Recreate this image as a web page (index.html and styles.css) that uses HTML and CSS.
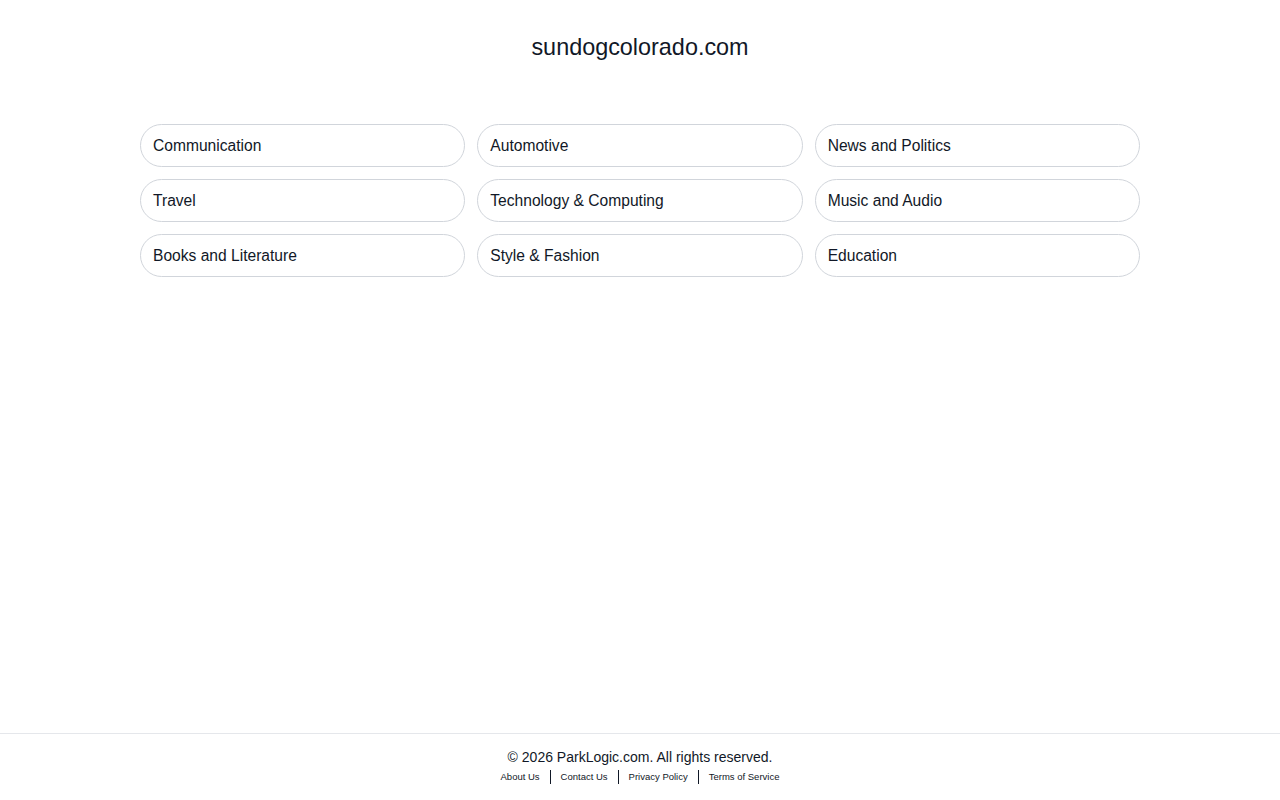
FILE: index.html
```html
<!DOCTYPE html>
<html lang="en">
<head>
  <meta charset="UTF-8">
  <meta name="viewport" content="width=device-width, initial-scale=1.0">
  <title>sundogcolorado.com</title>
  <link rel="stylesheet" href="styles.css">
</head>
<body>
  <main class="page">
    <h1 class="domain">sundogcolorado.com</h1>

    <div class="topics">
      <a class="topic" href="#">Communication</a>
      <a class="topic" href="#">Automotive</a>
      <a class="topic" href="#">News and Politics</a>
      <a class="topic" href="#">Travel</a>
      <a class="topic" href="#">Technology &amp; Computing</a>
      <a class="topic" href="#">Music and Audio</a>
      <a class="topic" href="#">Books and Literature</a>
      <a class="topic" href="#">Style &amp; Fashion</a>
      <a class="topic" href="#">Education</a>
    </div>
  </main>

  <footer class="footer">
    <p class="copyright">&copy; 2026 ParkLogic.com. All rights reserved.</p>
    <nav class="footer-links">
      <a href="#">About Us</a>
      <a href="#">Contact Us</a>
      <a href="#">Privacy Policy</a>
      <a href="#">Terms of Service</a>
    </nav>
  </footer>
</body>
</html>
```
FILE: styles.css
```css
:root {
  --text-color: #111827;
  --border-color: #d1d5db;
  --rule-color: #e5e7eb;
}

* {
  box-sizing: border-box;
}

html, body {
  height: 100%;
}

body {
  margin: 0;
  display: flex;
  flex-direction: column;
  font-family: "Liberation Sans", Arial, sans-serif;
  color: var(--text-color);
  background: #fff;
}

.page {
  flex: 1;
  width: 1000px;
  margin: 0 auto;
}

.domain {
  margin: 33px 0 0;
  text-align: center;
  font-size: 23.4px;
  font-weight: normal;
  line-height: 28px;
}

.topics {
  display: grid;
  grid-template-columns: repeat(3, 1fr);
  gap: 12px;
  margin-top: 63px;
}

.topic {
  display: block;
  height: 43px;
  padding: 0 12px;
  line-height: 41px;
  font-size: 15.6px;
  color: var(--text-color);
  text-decoration: none;
  border: 1px solid var(--border-color);
  border-radius: 22px;
}

.footer {
  border-top: 1px solid var(--rule-color);
  padding: 13px 0 16px;
  text-align: center;
}

.copyright {
  margin: 0;
  font-size: 14px;
  line-height: 20px;
}

.footer-links {
  display: flex;
  justify-content: center;
  margin-top: 3px;
}

.footer-links a {
  padding: 0 10px;
  font-size: 9.5px;
  line-height: 14px;
  color: var(--text-color);
  text-decoration: none;
  border-left: 1px solid var(--text-color);
}

.footer-links a:first-child {
  border-left: none;
}
```
